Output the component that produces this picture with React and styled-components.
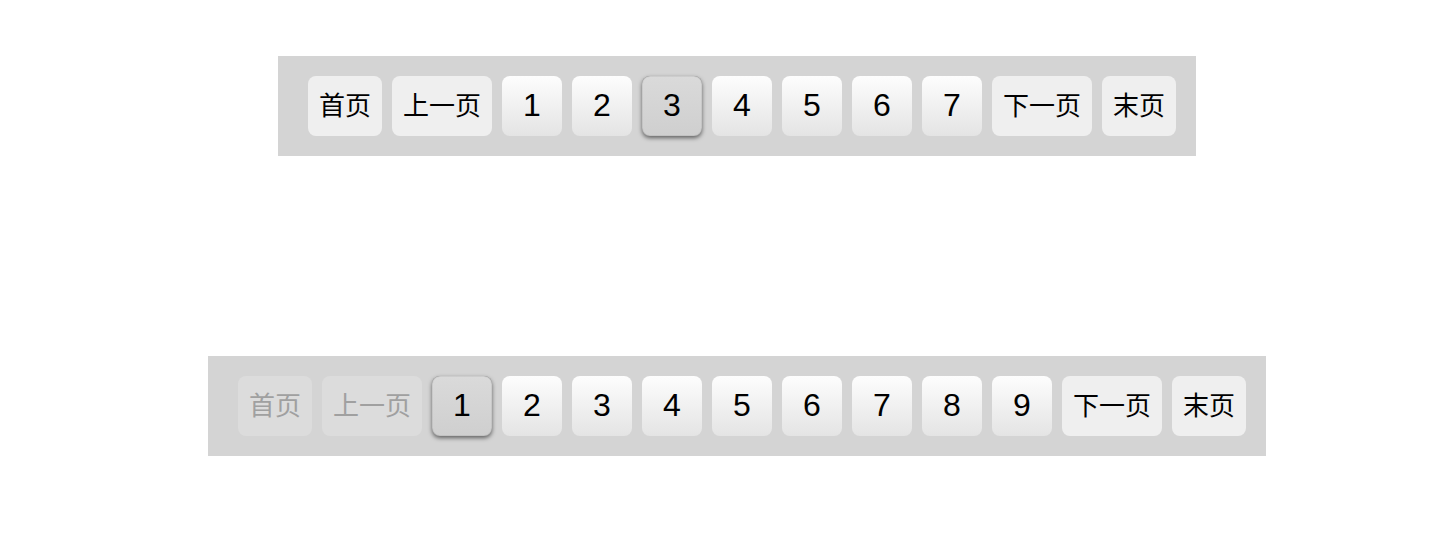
import React from 'react';
import styled, { createGlobalStyle } from 'styled-components';

const GlobalStyle = createGlobalStyle`
  html, body {
    margin: 0;
    padding: 0;
    background: #ffffff;
    font-family: "Noto Sans CJK SC", "Noto Sans", sans-serif;
  }
`;

const Page = styled.div`
  display: flex;
  flex-direction: column;
  align-items: center;
  gap: 200px;
  padding: 56px 0 86px 22px;
`;

const Bar = styled.nav`
  display: flex;
  gap: 10px;
  padding: 20px 20px 20px 30px;
  background: #d4d4d4;
`;

const PageButton = styled.button`
  box-sizing: border-box;
  height: 60px;
  min-width: 60px;
  padding: 0 11px 3px;
  border: none;
  border-radius: 8px;
  font-family: "Liberation Sans", "Noto Sans CJK SC", sans-serif;
  font-size: 32px;
  line-height: 1;
  color: #000;
  cursor: pointer;
  background: linear-gradient(to bottom, #fdfdfd, #e4e4e4);

  ${props => props.$text && `
    font-family: "Noto Sans CJK SC", sans-serif;
    font-size: 26px;
    padding-bottom: 4px;
    background: #efefef;
  `}

  ${props => props.$active && `
    background: linear-gradient(to bottom, #dadada, #cfcfcf);
    box-shadow: 0 2px 4px rgba(0, 0, 0, 0.55), inset 0 0 1px rgba(0, 0, 0, 0.6);
  `}

  ${props => props.$disabled && `
    background: #dcdcdc;
    color: #a0a0a0;
    cursor: default;
  `}
`;

const Pagination = ({ total, current }) => {
  const first = current === 1;
  const last = current === total;
  const pages = Array.from({ length: total }, (_, i) => i + 1);

  return (
    <Bar>
      <PageButton $text $disabled={first}>首页</PageButton>
      <PageButton $text $disabled={first}>上一页</PageButton>
      {pages.map(p => (
        <PageButton key={p} $active={p === current}>{p}</PageButton>
      ))}
      <PageButton $text $disabled={last}>下一页</PageButton>
      <PageButton $text $disabled={last}>末页</PageButton>
    </Bar>
  );
};

const App = () => (
  <>
    <GlobalStyle />
    <Page>
      <Pagination total={7} current={3} />
      <Pagination total={9} current={1} />
    </Page>
  </>
);

export default App;
